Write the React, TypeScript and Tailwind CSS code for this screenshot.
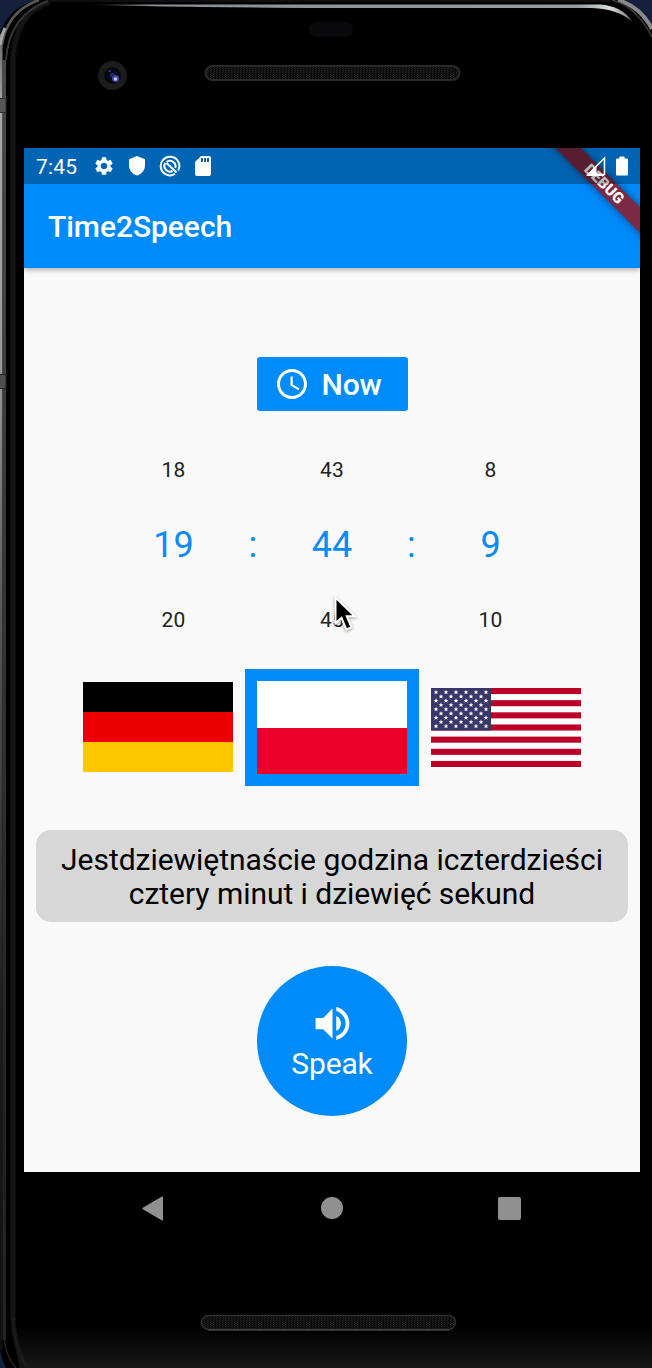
import React from "react";
import { MdAccessTime, MdSdCard, MdSettings, MdVolumeUp } from "react-icons/md";

function PhoneBody() {
  return (
    <svg className="absolute inset-0" width="652" height="1368" viewBox="0 0 652 1368" aria-hidden="true">
      <defs>
        <linearGradient id="metal" x1="0" y1="0" x2="0" y2="1">
          <stop offset="0" stopColor="#6a6a6a" />
          <stop offset="0.06" stopColor="#aaaaaa" />
          <stop offset="0.25" stopColor="#9a9a9a" />
          <stop offset="0.45" stopColor="#555555" />
          <stop offset="0.75" stopColor="#1c1c1c" />
          <stop offset="1" stopColor="#101010" />
        </linearGradient>
        <linearGradient id="rim" x1="0" y1="0" x2="0" y2="1">
          <stop offset="0" stopColor="#4a4a4a" />
          <stop offset="0.3" stopColor="#3a3a3a" />
          <stop offset="1" stopColor="#1c1c1c" />
        </linearGradient>
        <linearGradient id="shine" x1="0" y1="0" x2="1" y2="0">
          <stop offset="0" stopColor="#8a9096" stopOpacity="0" />
          <stop offset="0.12" stopColor="#8a9096" />
          <stop offset="0.9" stopColor="#969b9e" />
          <stop offset="0.96" stopColor="#d8dcdc" />
          <stop offset="1" stopColor="#777777" />
        </linearGradient>
        <linearGradient id="floor" x1="0" y1="0" x2="0" y2="1">
          <stop offset="0" stopColor="#000000" />
          <stop offset="1" stopColor="#171717" />
        </linearGradient>
        <pattern id="mesh" width="3" height="2" patternUnits="userSpaceOnUse">
          <rect width="3" height="2" fill="#0b0b0b" />
          <rect width="1" height="1" fill="#272523" />
          <rect x="1" y="1" width="1" height="1" fill="#1b1a18" />
        </pattern>
        <radialGradient id="lens">
          <stop offset="0" stopColor="#0b1230" />
          <stop offset="0.8" stopColor="#05060d" />
          <stop offset="1" stopColor="#0c0c0c" />
        </radialGradient>
        <filter id="soft"><feGaussianBlur stdDeviation="1.2" /></filter>
      </defs>
      <rect width="652" height="1368" fill="#14203c" />
      <path d="M0 34 Q8 8 36 0 H622 Q644 8 652 30 V1368 H6 Q2 1360 0 1350Z" fill="#000" />
      <rect x="0" y="34" width="2.5" height="1316" fill="url(#metal)" />
      <rect x="2.5" y="60" width="3.5" height="1280" fill="url(#rim)" />
      <path d="M13 1320 V60 Q15 12 50 2" fill="none" stroke="#181818" strokeWidth="5" filter="url(#soft)" />
      <path d="M2 45 Q7 11 39 0" fill="none" stroke="#5a5a5a" strokeWidth="2.5" />
      <path d="M6 60 Q9 15 48 1" fill="none" stroke="#353535" strokeWidth="2" />
      <path d="M0 45 Q2 34 5 28" fill="none" stroke="#a9a9a9" strokeWidth="3" />
      <rect x="-1" y="98.500" width="7" height="14" fill="#565656" stroke="#2c2c2c" />
      <rect x="-1" y="374.500" width="7" height="14" fill="#4e4e4e" stroke="#242424" />
      <path d="M618 0 Q641 7 652 29" fill="none" stroke="#8a8a8a" strokeWidth="4" />
      <path d="M612 0 Q637 7 652 37" fill="none" stroke="#3a3a3a" strokeWidth="1.500" />
      <path d="M650 1310 V50" stroke="#181818" strokeWidth="4" filter="url(#soft)" />
      <path d="M87 4.500 H600 Q622 6 632 21.500 Q618 9 592 8 H330 Q150 7 87 4.500Z" fill="url(#shine)" />
      <path d="M50 1 H610" stroke="#151515" strokeWidth="1.500" />
      <path d="M14 1325 H652 V1368 H20Q14 1350 14 1325Z" fill="url(#floor)" />
      <path d="M4 1200 V1335 Q5 1356 16 1368" fill="none" stroke="#2a2a2a" strokeWidth="1.200" />
      <path d="M13 1318 Q14 1350 28 1368" fill="none" stroke="#1b1b1b" strokeWidth="4" filter="url(#soft)" />
      <rect x="309" y="22" width="44" height="15" rx="7.500" fill="#0a0a0d" />
      <circle cx="112.500" cy="75.500" r="14.500" fill="#1c1c1c" />
      <circle cx="112.500" cy="75.500" r="8.500" fill="url(#lens)" />
      <circle cx="112" cy="75" r="2.200" fill="#1d2c66" />
      <circle cx="109.500" cy="71" r="1" fill="#38429a" />
      <circle cx="115.500" cy="78.500" r="3.500" fill="#4248a8" />
      <circle cx="115.500" cy="79" r="1.800" fill="#c9c2f5" />
      <rect x="205.500" y="66" width="254" height="14" rx="7" fill="url(#mesh)" stroke="#292929" strokeWidth="2" />
      <rect x="201.500" y="1315.500" width="254" height="14" rx="7" fill="url(#mesh)" stroke="#2e2e2e" strokeWidth="1.500" />
      <path d="M208 1330 H449" stroke="#555" />
    </svg>
  );
}

function Shield() {
  return (
    <svg width="16" height="20" viewBox="0 0 16 20" fill="#fff">
      <path d="M8 0 L16 3.300 V9 C16 14.300 12.700 18.300 8 19.500 C3.300 18.300 0 14.300 0 9 V3.300Z" />
    </svg>
  );
}

function Radar() {
  return (
    <svg width="22" height="22" viewBox="0 0 22 22" fill="none" stroke="#fff">
      <path d="M19.200 15.500 A9.300 9.300 0 1 0 16 18.900" strokeWidth="2" />
      <path d="M13.500 16 A5.600 5.600 0 0 1 6.300 8" strokeWidth="2" />
      <path d="M7.500 8 L17.500 17.500" strokeWidth="2.200" />
      <path d="M7.500 7 A5.600 5.600 0 0 1 16.300 13" strokeWidth="2" />
    </svg>
  );
}

function StatusBar() {
  return (
    <div className="relative flex h-9 items-center bg-black/28 pl-3 pr-[12px] text-white">
      <span className="w-[57px] pt-0.5 text-[21px] leading-none tracking-[0.2px]">7:45</span>
      <MdSettings className="size-[22px]" />
      <span className="ml-[14px]"><Shield /></span>
      <span className="ml-[14px]"><Radar /></span>
      <MdSdCard className="ml-[10px] size-[24px]" />
      <svg className="ml-auto" width="20" height="20" viewBox="0 0 20 20">
        <path d="M18.500 2 V18.500 H2Z" fill="none" stroke="#fff" strokeWidth="1.500" />
        <path d="M0 20 L10.500 9.500 V18 H18 V20Z" fill="#fff" />
      </svg>
      <svg className="ml-[10px]" width="12" height="20" viewBox="0 0 12 20" fill="#fff">
        <path d="M3.500 0.500 H8.500 V2.500 H11 Q12 2.500 12 3.500 V18.500 Q12 19.500 11 19.500 H1 Q0 19.500 0 18.500 V3.500 Q0 2.500 1 2.500 H3.500Z" />
      </svg>
    </div>
  );
}

function Header() {
  return (
    <header className="relative h-[120px] shrink-0 bg-[#008bfb] shadow-[0_2px_5px_rgba(0,0,0,0.3)]">
      <div className="absolute inset-0 overflow-hidden">
        <div className="absolute left-[500px] top-[27px] h-[18px] w-40 rotate-45 bg-[#7b2945] text-center text-[15.3px] font-black leading-[18px] text-white shadow-[0_0_9px_rgba(0,0,0,0.5)]">
          DEBUG
        </div>
      </div>
      <StatusBar />
      <h1 className="flex h-[84px] items-center pl-6 pt-px text-[30px] font-medium tracking-[-0.05px] text-white">Time2Speech</h1>
    </header>
  );
}

function Wheel({ values }: { values: [string, string, string] }) {
  return (
    <div className="grid w-[79.250px] grid-rows-[75px_75px_75px] place-items-center text-[21px] tracking-[0.3px] text-[#212121]">
      <span className="pt-0.5">{values[0]}</span>
      <span className="text-[36px] tracking-normal text-[#068bf8]">{values[1]}</span>
      <span className="pt-0.5">{values[2]}</span>
    </div>
  );
}

function Colon() {
  return <span className="w-[79.250px] text-center text-[36px] text-[#068bf8]">:</span>;
}

function Cursor() {
  return (
    <svg className="drop-shadow-[0_1px_1.5px_rgba(0,0,0,0.4)]" width="26" height="40" viewBox="0 0 26 40">
      <path d="M1.500 3.500 V29.300 L7.500 24 L12.300 35.500 L17.500 33.300 L12.800 22.300 H20.800Z" fill="#000" stroke="#fff" strokeWidth="2" />
    </svg>
  );
}

function UsFlag() {
  const stripes = [0, 1, 2, 3, 4, 5, 6];
  const stars = Array.from({ length: 9 }, (_, row) =>
    Array.from({ length: row % 2 ? 5 : 6 }, (_, col) => ({
      x: 5 + col * 10 + (row % 2 ? 5 : 0),
      y: 4.200 + row * 4.250,
    })),
  ).flat();
  return (
    <svg width="150" height="79" viewBox="0 0 150 79">
      <defs>
        <path id="star" d="M0 -2.400 L0.700 -0.800 L2.300 -0.700 L1.100 0.400 L1.500 2 L0 1.100 L-1.500 2 L-1.100 0.400 L-2.300 -0.700 L-0.700 -0.800Z" fill="#fff" />
      </defs>
      <rect width="150" height="79" fill="#fff" />
      {stripes.map((s) => (
        <rect key={s} y={(s * 158) / 13} width="150" height={79 / 13} fill="#b90027" />
      ))}
      <rect width="60" height="42.500" fill="#39366a" />
      {stars.map((s) => (
        <use key={`${s.x}-${s.y}`} href="#star" x={s.x} y={s.y} />
      ))}
    </svg>
  );
}

function Flags() {
  return (
    <div className="mt-3 flex h-[117px] items-center gap-3">
      <div className="mb-0.5 grid h-[90px] w-[150px] grid-rows-3">
        <div className="bg-black" />
        <div className="bg-[#ef0000]" />
        <div className="bg-[#ffc700]" />
      </div>
      <div className="grid h-[117px] w-[174px] grid-rows-2 border-12 border-[#008bfb]">
        <div className="bg-white" />
        <div className="bg-[#eb002b]" />
      </div>
      <UsFlag />
    </div>
  );
}

function NavBar() {
  return (
    <nav className="relative flex h-[72px] items-center pl-[118px]">
      <svg width="21" height="25" viewBox="0 0 21 25"><path d="M20 0.500 Q21 0 21 1.500 V23.500 Q21 25 20 24.500 L0.800 13.300 Q-0.200 12.500 0.800 11.700Z" fill="#909090" /></svg>
      <div className="ml-[158px] size-[22px] rounded-full bg-[#909090]" />
      <div className="ml-[155px] size-[23px] rounded-xs bg-[#909090]" />
    </nav>
  );
}

export default function App() {
  return (
    <div className="relative h-[1368px] w-[652px] overflow-hidden bg-black font-[Roboto,sans-serif]">
      <PhoneBody />
      <div className="relative ml-6 w-[616px] pt-[148px]">
        <div className="flex h-[1024px] flex-col bg-[#f9f9f9]">
          <Header />
          <main className="relative flex flex-1 flex-col items-center">
            <button className="mt-[89px] flex h-[54px] w-[151px] items-center rounded-[3px] bg-[#008bfb] pl-[17px] text-[30px] font-medium tracking-[-0.1px] text-white">
              <MdAccessTime className="mr-3 size-9" />
              <span className="pt-px">Now</span>
            </button>
            <div className="mt-[21px] flex items-center">
              <Wheel values={["18", "19", "20"]} />
              <Colon />
              <Wheel values={["43", "44", "45"]} />
              <Colon />
              <Wheel values={["8", "9", "10"]} />
            </div>
            <Flags />
            <p className="mt-11 flex h-[92px] w-[592px] items-center justify-center rounded-[15px] bg-[#d7d7d7] pt-0.5 text-center text-[30px] leading-[34px] tracking-[-0.04px] text-black">
              <span>Jestdziewiętnaście godzina iczterdzieści<br />cztery minut i dziewięć sekund</span>
            </p>
            <button className="mt-11 flex size-[150px] flex-col items-center rounded-full bg-[#008bfb] pt-[35px] text-[30px] leading-[36px] tracking-[-0.15px] text-white">
              <MdVolumeUp className="size-[45px]" />
              Speak
            </button>
            <div className="absolute left-[310px] top-[326px]"><Cursor /></div>
          </main>
        </div>
        <NavBar />
      </div>
    </div>
  );
}
